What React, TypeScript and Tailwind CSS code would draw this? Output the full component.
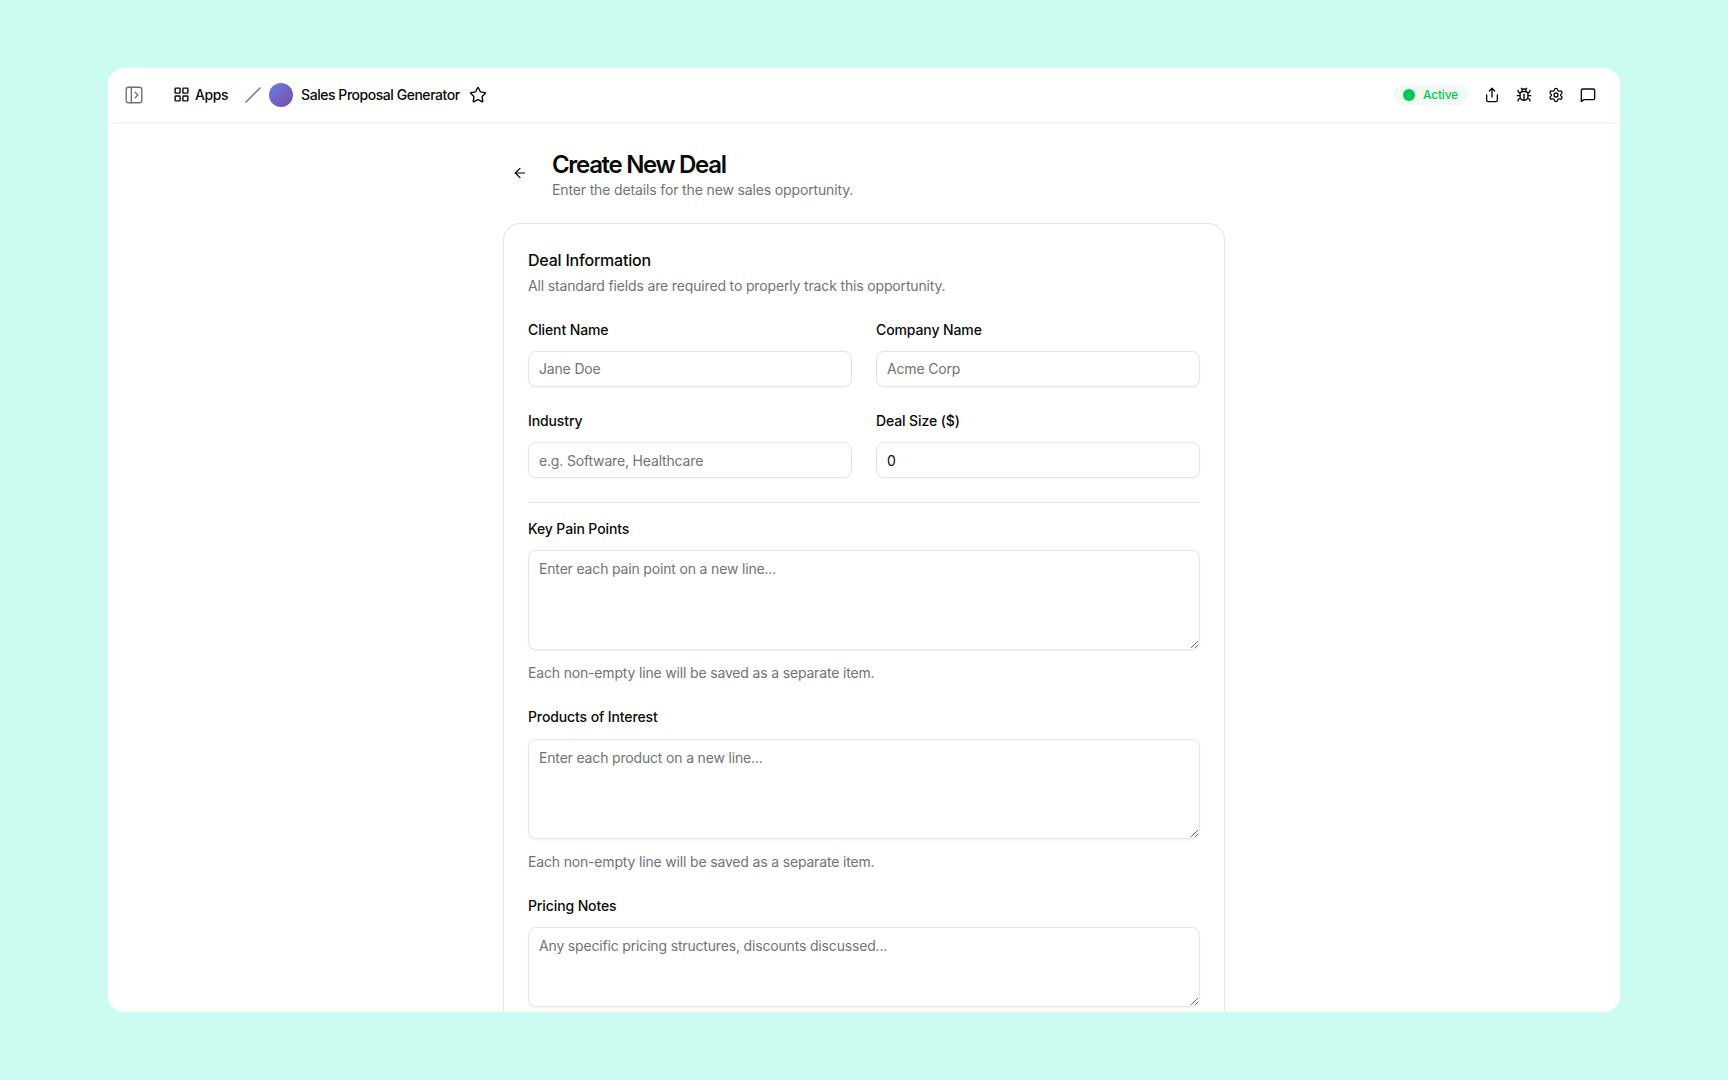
import { ArrowLeft, Bug, LayoutGrid, Settings, Share, Star } from "lucide-react";

const Header = () => {
  return (
    <header className="flex h-14 shrink-0 items-center border-b-2 border-[#f5f5f5] pb-1 pt-[3px] pl-4 pr-6 text-sm font-medium text-neutral-950">
      <svg
        className="text-neutral-500"
        width="20"
        height="20"
        viewBox="0 0 20 20"
        fill="none"
        stroke="currentColor"
        strokeWidth="1.4"
        strokeLinecap="round"
        strokeLinejoin="round"
      >
        <rect x="2.2" y="2.2" width="15.6" height="15.6" rx="2.2" />
        <path d="M7.3 2.2v15.6M11.2 7.3l2.7 2.7-2.7 2.7" />
      </svg>

      <div className="ml-[29px] flex items-center gap-[5px]">
        <LayoutGrid size={17} />
        <span className="tracking-[-0.03em]">Apps</span>
      </div>

      <svg className="ml-[17px] text-neutral-500" width="16" height="16" viewBox="0 0 16 16">
        <path d="M1 15L15 1" stroke="currentColor" strokeWidth="1.4" strokeLinecap="round" />
      </svg>

      <div className="ml-2 size-6 rounded-full bg-linear-135 from-[#667eea] to-[#764ba2]" />
      <span className="ml-2 tracking-[-0.033em]">Sales Proposal Generator</span>
      <Star className="ml-[9px]" size={18} strokeWidth={1.9} />

      <div className="ml-auto flex h-5 items-center gap-2 rounded-full bg-[#f0faf2] px-2.5 text-xs tracking-[-0.015em] text-green-500">
        <span className="size-3 rounded-full bg-green-500" />
        Active
      </div>
      <div className="ml-4 flex items-center gap-4">
        <Share size={16} />
        <Bug size={16} />
        <Settings size={16} />
        <svg
          width="16"
          height="16"
          viewBox="0 0 24 24"
          fill="none"
          stroke="currentColor"
          strokeWidth="2"
          strokeLinecap="round"
          strokeLinejoin="round"
        >
          <path d="M22 17a2 2 0 0 1-2 2H6l-4 2.8V5a2 2 0 0 1 2-2h16a2 2 0 0 1 2 2z" />
        </svg>
      </div>
    </header>
  );
};

const inputStyle =
  "block w-full rounded-lg border border-neutral-200 bg-white px-2.5 text-sm tracking-[-0.012em] text-neutral-950 shadow-xs outline-none placeholder:text-neutral-500";

const Label = ({ children }: { children: string }) => (
  <label className="text-sm leading-snug font-medium tracking-[-0.008em] text-neutral-950">
    {children}
  </label>
);

const TextField = ({
  label,
  placeholder,
  value,
}: {
  label: string;
  placeholder?: string;
  value?: string;
}) => {
  return (
    <div className="flex flex-col gap-3">
      <Label>{label}</Label>
      <input className={`${inputStyle} h-9`} placeholder={placeholder} defaultValue={value} />
    </div>
  );
};

const AreaField = ({
  label,
  placeholder,
  hint,
  height,
}: {
  label: string;
  placeholder: string;
  hint?: string;
  height: string;
}) => {
  return (
    <div className="flex flex-col gap-3">
      <Label>{label}</Label>
      <textarea className={`${inputStyle} ${height} resize-y py-2`} placeholder={placeholder} />
      {hint && (
        <p className="text-sm leading-normal tracking-[-0.012em] text-neutral-500">{hint}</p>
      )}
    </div>
  );
};

const App = () => {
  return (
    <div className="h-[1080px] w-[1728px] overflow-hidden bg-[#cbfbf1] px-[108px] py-[68px] font-['Inter',sans-serif]">
      <div className="flex h-full flex-col overflow-hidden rounded-2xl bg-white">
        <Header />

        <main className="mx-auto min-h-0 w-[720px] flex-1 pt-[25px]">
          <div className="flex items-start gap-4">
            <button className="mt-2 flex size-8 items-center justify-center">
              <ArrowLeft size={16} strokeWidth={1.8} />
            </button>
            <div>
              <h1 className="text-2xl leading-[31px] font-semibold tracking-[-0.055em] text-neutral-950">
                Create New Deal
              </h1>
              <p className="text-sm tracking-[-0.01em] text-neutral-500">
                Enter the details for the new sales opportunity.
              </p>
            </div>
          </div>

          <section className="mt-[23.5px] flex h-[1100px] flex-col gap-6 rounded-2xl px-6 pt-[25px] ring-1 ring-neutral-200">
            <div className="flex flex-col gap-1">
              <h2 className="text-base leading-snug font-medium tracking-[-0.013em] text-neutral-950">
                Deal Information
              </h2>
              <p className="text-sm leading-normal tracking-[-0.011em] text-neutral-500">
                All standard fields are required to properly track this opportunity.
              </p>
            </div>

            <div className="grid grid-cols-2 gap-6">
              <TextField label="Client Name" placeholder="Jane Doe" />
              <TextField label="Company Name" placeholder="Acme Corp" />
              <TextField label="Industry" placeholder="e.g. Software, Healthcare" />
              <TextField label="Deal Size ($)" value="0" />
            </div>

            <div className="flex flex-col gap-6 border-t border-neutral-200 pt-4">
              <AreaField
                label="Key Pain Points"
                placeholder="Enter each pain point on a new line..."
                hint="Each non-empty line will be saved as a separate item."
                height="h-[100px]"
              />
              <AreaField
                label="Products of Interest"
                placeholder="Enter each product on a new line..."
                hint="Each non-empty line will be saved as a separate item."
                height="h-[100px]"
              />
              <AreaField
                label="Pricing Notes"
                placeholder="Any specific pricing structures, discounts discussed..."
                height="h-20"
              />
            </div>
          </section>
        </main>
      </div>
    </div>
  );
};

export default App;
